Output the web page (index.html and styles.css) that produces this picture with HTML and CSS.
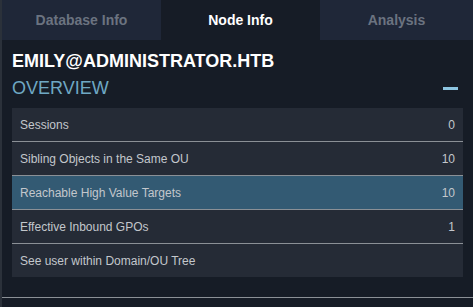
FILE: index.html
```html
<!DOCTYPE html>
<html lang="en">
<head>
  <meta charset="UTF-8" />
  <title>Node Info</title>
  <link rel="stylesheet" href="styles.css">
</head>
<body>
  <div class="panel">
    <nav class="tabs">
      <a href="#" class="tab">Database Info</a>
      <a href="#" class="tab active">Node Info</a>
      <a href="#" class="tab">Analysis</a>
    </nav>

    <div class="content">
      <h1 class="node-name">EMILY@ADMINISTRATOR.HTB</h1>
      <div class="section-head">
        <span class="section-title">OVERVIEW</span>
        <span class="collapse"></span>
      </div>

      <ul class="props">
        <li><span>Sessions</span><span>0</span></li>
        <li><span>Sibling Objects in the Same OU</span><span>10</span></li>
        <li class="selected"><span>Reachable High Value Targets</span><span>10</span></li>
        <li><span>Effective Inbound GPOs</span><span>1</span></li>
        <li><span>See user within Domain/OU Tree</span></li>
      </ul>

      <div class="divider"></div>
    </div>
  </div>
</body>
</html>
```

FILE: styles.css
```css
html, body {
  margin: 0;
  height: 100%;
  background-color: #161c26;
  font-family: "Liberation Sans", Arial, sans-serif;
}

.panel {
  height: 100%;
  border-left: 2px solid #2b313a;
  display: flex;
  flex-direction: column;
}

.tabs {
  display: flex;
  height: 40px;
  background-color: #1f2738;
}

.tab {
  width: 159px;
  display: flex;
  align-items: center;
  justify-content: center;
  text-decoration: none;
  font-size: 14px;
  font-weight: bold;
  color: #6b7380;
}

.tab:last-child {
  width: auto;
  flex: 1;
}

.tab.active {
  background-color: #161c26;
  color: #ffffff;
}

.content {
  padding: 0 10px;
}

.node-name {
  margin: 10px 0 0 0;
  font-size: 18px;
  font-weight: bold;
  color: #ffffff;
  line-height: 22px;
}

.section-head {
  display: flex;
  justify-content: space-between;
  align-items: center;
  height: 32px;
  margin-bottom: 4px;
}

.section-title {
  font-size: 18px;
  color: #6fa8c4;
}

.collapse {
  width: 15px;
  height: 3px;
  background-color: #8cc4e0;
  margin-right: 5px;
}

.props {
  list-style: none;
  margin: 0;
  padding: 0;
  background-color: #252b36;
}

.props li {
  display: flex;
  justify-content: space-between;
  align-items: center;
  height: 33px;
  padding: 0 8px;
  font-size: 12px;
  color: #c3c7cc;
  border-top: 1px solid #8b9096;
}

.props li:first-child {
  border-top: none;
}

.props li.selected {
  background-color: #335a73;
}

.divider {
  height: 1px;
  margin: 20px -10px 0 -10px;
  background-color: #8b9096;
}
```
